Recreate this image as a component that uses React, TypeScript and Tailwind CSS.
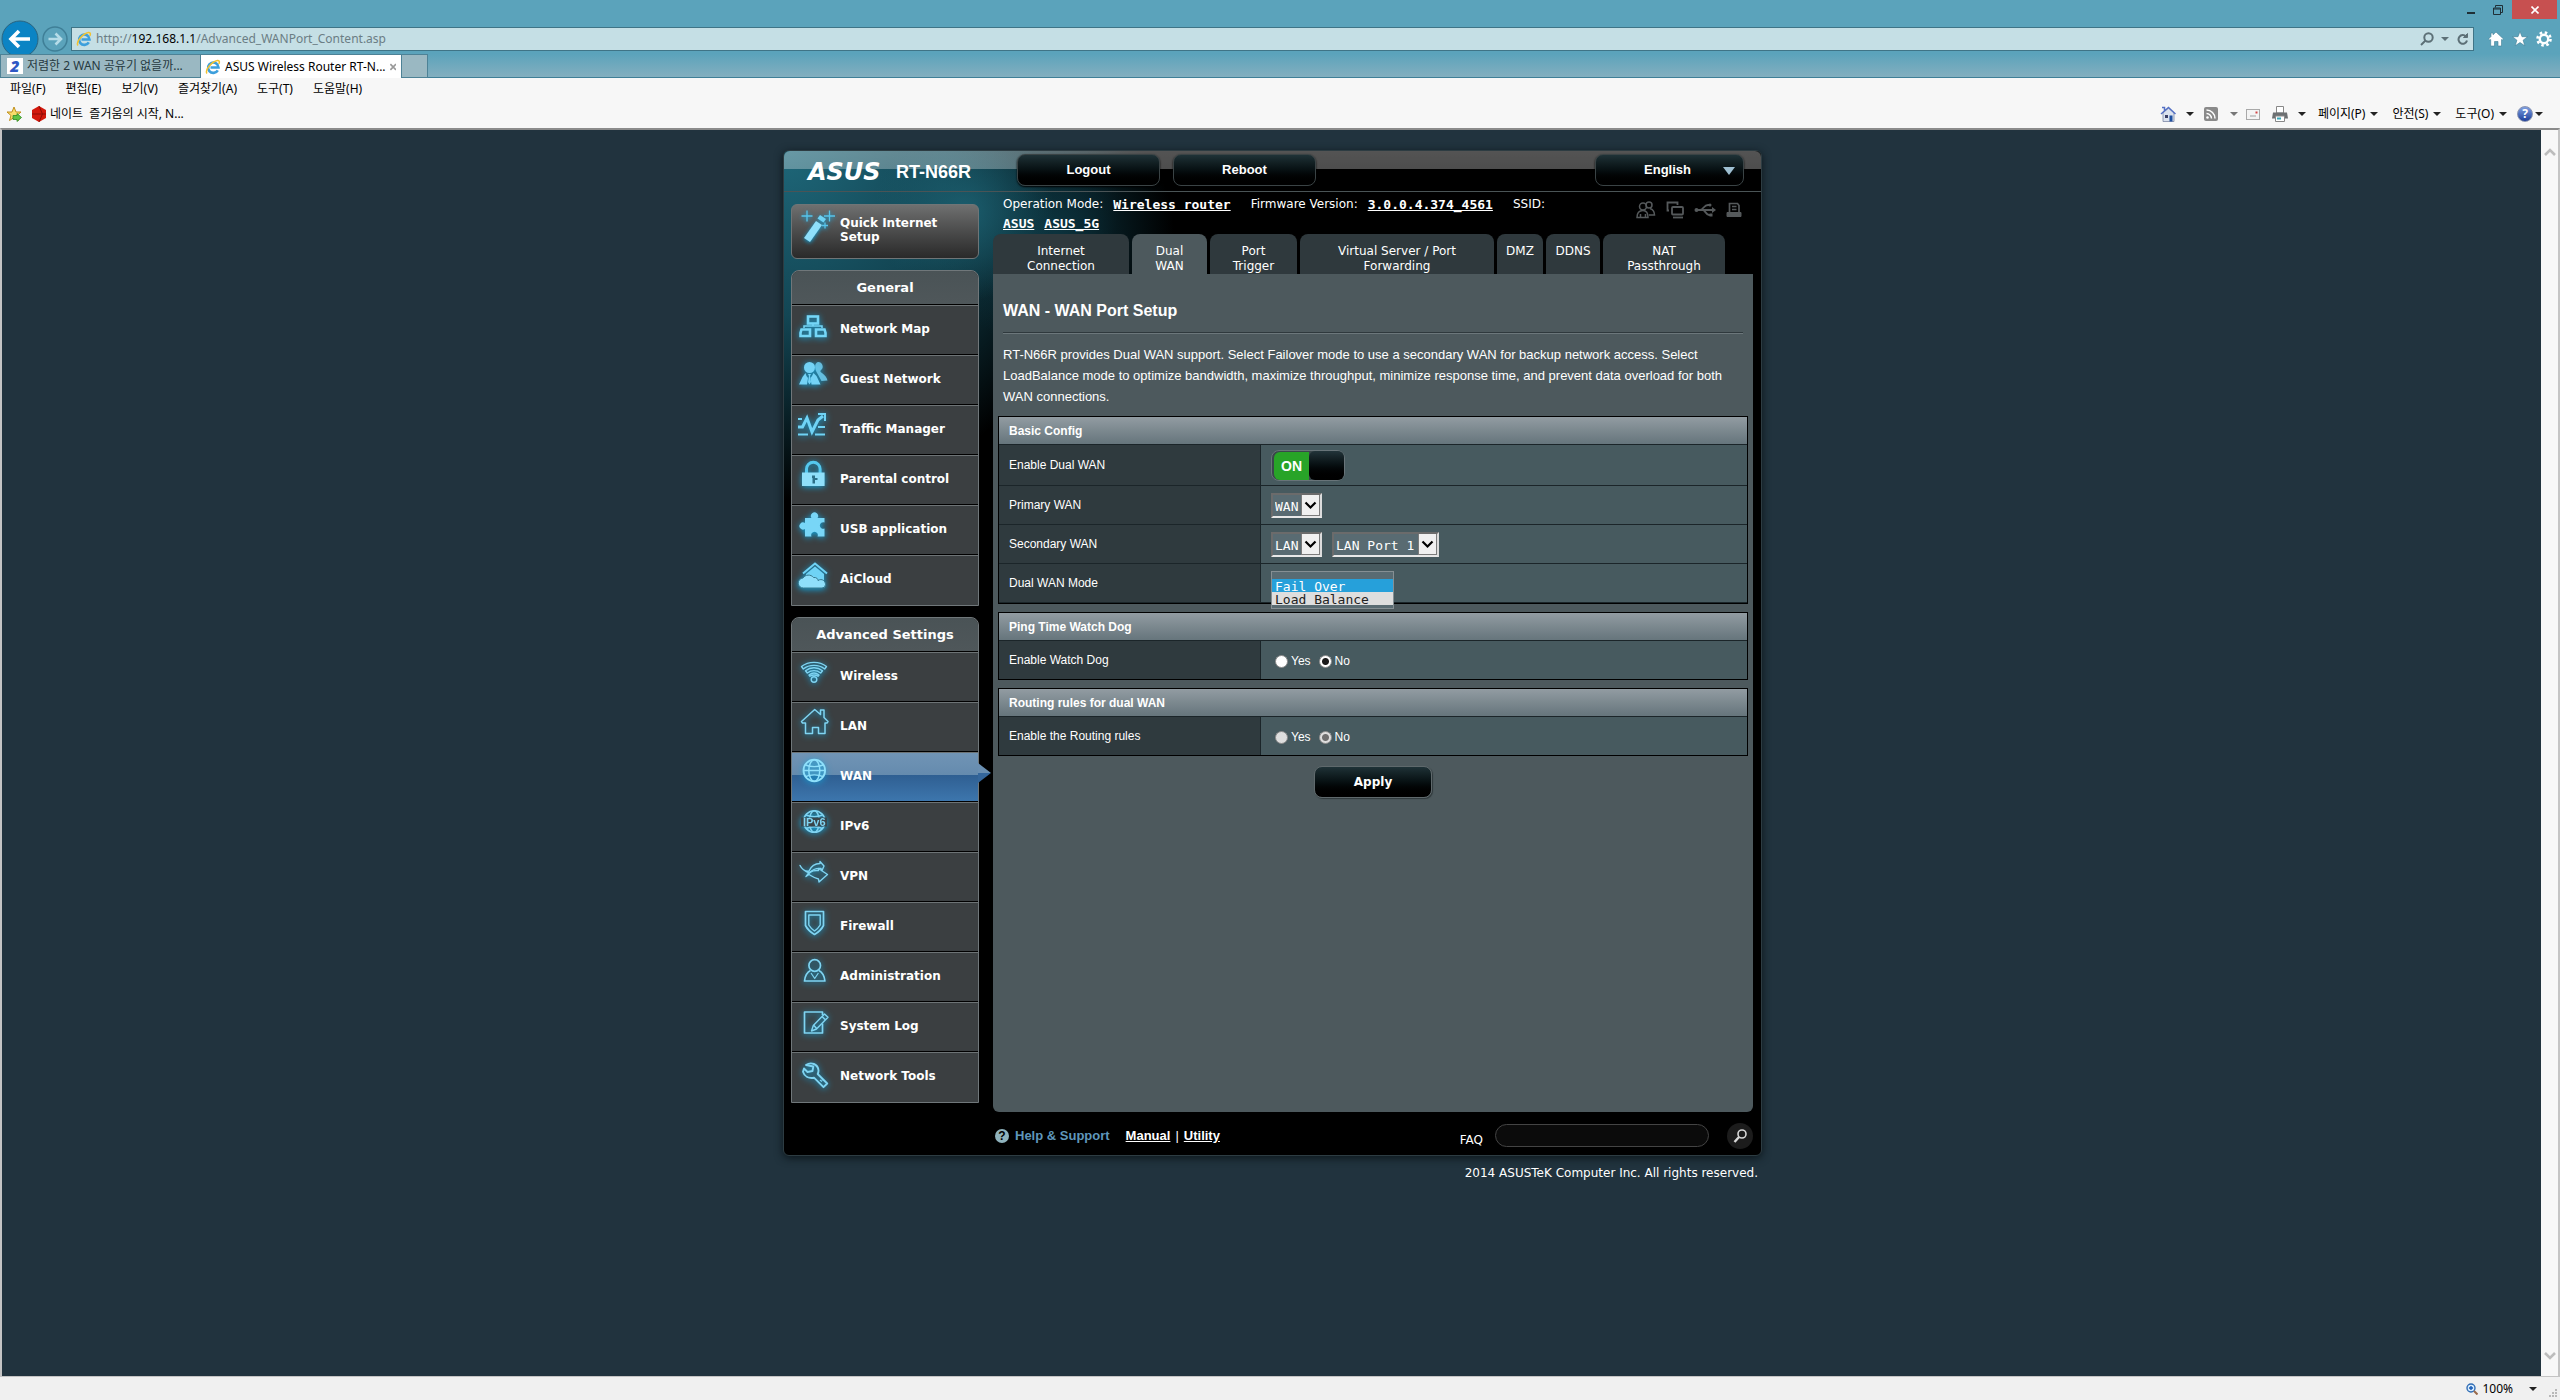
import React from 'react';

interface MenuEntry {
    label: string;
    icon: React.ReactNode;
    active?: boolean;
}

const ICE = '#7fd4f2';

const generalMenu: MenuEntry[] = [
    {
        label: 'Network Map',
        icon: (
            <g fill="none" stroke="#74d6f7" strokeWidth="2.600">
                <rect x="12" y="6.500" width="10" height="7" />
                <path d="M17 13.500v3M8 18v-2h18v2" strokeWidth="1.500" />
                <path d="M5.500 19.500H14v6.500H4.500v-3z" />
                <path d="M20 19.500h8.500l1 3.500v3H20z" />
            </g>
        ),
    },
    {
        label: 'Guest Network',
        icon: (
            <g fill="#74d3f6">
                <path d="M22 2a4.500 4.500 0 0 1 3 8c-1 1-1 2 1 3 3 2 5 5 5.500 7.500l-6 .5-5-9c-2-4-2-9 1.500-10z" opacity=".8" />
                <circle cx="13.500" cy="7.500" r="5.500" />
                <path d="M9.500 13l-3 4-3.500 7.500h8l1-6.500-1.500-2zM17.500 13l3 3 4 8.500h-9l-1-6.500 1.500-2z" />
                <path d="M12 14h3l-1 2 1 6-1.500 2.500L12 22l1-6z" />
            </g>
        ),
    },
    {
        label: 'Traffic Manager',
        icon: (
            <g fill="none" stroke="#6fd3f5">
                <path d="M2 17h4.500L11 8l5 14L22 10l5-4" strokeWidth="3" />
                <path d="M22 4h7v7" strokeWidth="2" />
                <path d="M2 9h4M2 24.500h10M19 24.500h10M22 17h7" strokeWidth="2" />
            </g>
        ),
    },
    {
        label: 'Parental control',
        icon: (
            <g>
                <path d="M10.500 13V9a6.800 6.800 0 0 1 13.600 0v4" fill="none" stroke="#55c8ee" strokeWidth="3" />
                <path d="M6 12.500h22.600v13.500H6z" fill="#8fdffa" />
                <path d="M16 15.500h3v2.500h2.500v2H19v3.500h-2.500V18H16z" fill="#2b6f88" />
            </g>
        ),
    },
    {
        label: 'USB application',
        icon: (
            <path
                d="M9 8h6.500a3.600 3.600 0 1 1 6 0h7v4.500a3.300 3.300 0 1 0 0 6v8h-7a3.300 3.300 0 1 0-6 0H9V19a3.600 3.600 0 1 1 0-6z"
                fill="#78d6f7"
            />
        ),
    },
    {
        label: 'AiCloud',
        icon: (
            <g>
                <path d="M7 13.500L19 3.500l12 10" fill="none" stroke="#6fd3f5" strokeWidth="2" />
                <path d="M10 14l9-7.500 9 7.500v6H10z" fill="#6fd3f5" />
                <path
                    d="M7.500 28a5 5 0 0 1-.5-10c2-3.500 8-4 10.500-.5 3-.5 4.500 1.500 4.500 3 4-2.500 7.500.5 7.500 4a3.500 3.500 0 0 1-3.500 3.500z"
                    fill="#8fdffa"
                    stroke="#35788e"
                    strokeWidth="1"
                />
            </g>
        ),
    },
];

const advancedMenu: MenuEntry[] = [
    {
        label: 'Wireless',
        icon: (
            <g fill="none" stroke={ICE} strokeWidth="1.4" strokeLinejoin="round">
                <path d="M5.500 9.500c7-5.500 18-5.500 25 0l-1.800 2.500c-6-4.800-15.400-4.800-21.400 0z" />
                <path d="M9.500 13.800c5-4 12-4 17 0l-1.800 2.200c-4-3-9.400-3-13.400 0z" />
                <path d="M13 18c3-2.300 7-2.300 10 0l-1 1.200c-2.500-1.500-5.500-1.500-8 0z" />
                <circle cx="18" cy="22.500" r="2.800" />
            </g>
        ),
    },
    {
        label: 'LAN',
        icon: (
            <path
                d="M5.500 14.500L18.700 2.500l5.800 5V3h3.500v7.500l4 4-1 1.500h-2v10.500h-6.500v-6h-6v6H9.500V16h-3z"
                fill="none"
                stroke={ICE}
                strokeWidth="1.500"
                strokeLinejoin="round"
            />
        ),
    },
    {
        label: 'WAN',
        active: true,
        icon: (
            <g fill="none" stroke="#8fe0fb" strokeWidth="1.500">
                <circle cx="18.300" cy="13.500" r="10.800" strokeWidth="1.800" />
                <ellipse cx="18.300" cy="13.500" rx="5.500" ry="10.800" />
                <path d="M9.500 8c5 2 12.500 2 17.500 0M7.500 13.500h21.600M9.500 19.500c5-2 12.500-2 17.500 0" />
            </g>
        ),
    },
    {
        label: 'IPv6',
        icon: (
            <g fill="none" stroke={ICE} strokeWidth="1.500">
                <circle cx="18.300" cy="14.500" r="10.800" />
                <ellipse cx="18.300" cy="14.500" rx="5" ry="10.800" />
                <path d="M10 8c5 2 11.500 2 16.500 0M10 21.500c5-2 11.500-2 16.500 0" />
                <path d="M5 10.500h26v9H5z" fill="#3a454a" stroke="none" />
                <text x="18.300" y="19" textAnchor="middle" fontSize="11" fontWeight="bold" fontFamily="Liberation Sans" fill={ICE} stroke="none">IPv6</text>
            </g>
        ),
    },
    {
        label: 'VPN',
        icon: (
            <g fill="none" stroke={ICE} strokeWidth="1.400" strokeLinejoin="round">
                <path d="M4 8.500c3 5 6 6 9 5.500 2-4.500 6-7.500 11-7.500v-2l4 4.500-2 4.500-1-2c-5-.5-8.500 1-11.500 4.500-3-1-7-2.500-9.500-7.500z" />
                <path d="M10 19.500c2-4 6-6.500 12.500-6v-2l9 6-8.500 7.500-.5-3c-4-.8-7-3-9.500-4.500z" />
            </g>
        ),
    },
    {
        label: 'Firewall',
        icon: (
            <g fill="none" stroke={ICE} strokeWidth="1.700" strokeLinejoin="round">
                <path d="M9.500 4.500h18v14c-1.500 3-5.500 7-9 9-3.500-2-7.500-6-9-9z" />
                <path d="M12.800 8h11.400v10c-1.500 2.500-3.500 4.500-5.700 6-2.200-1.500-4.200-3.500-5.700-6z" strokeWidth="1.400" />
            </g>
        ),
    },
    {
        label: 'Administration',
        icon: (
            <g fill="none" stroke={ICE} strokeWidth="1.700" strokeLinejoin="round">
                <circle cx="18.700" cy="8.500" r="5.800" />
                <path d="M14.500 13.500c-4 2-5.500 6-6 10.500h20.400c-.5-4.500-2-8.500-6-10.500" />
                <path d="M15 16l3.700 5.500 3.700-5.500" strokeWidth="1.200" />
            </g>
        ),
    },
    {
        label: 'System Log',
        icon: (
            <g fill="none" stroke={ICE} strokeWidth="1.700" strokeLinejoin="round">
                <path d="M26.500 16.500V26H8.500V5h18v3" />
                <path d="M15.500 24l1.800-5.500L28.500 7l3.500 3.300L20.500 22zM26 9.500l3.300 3.300M18 18.500l2.500 3" strokeWidth="1.400" />
            </g>
        ),
    },
    {
        label: 'Network Tools',
        icon: (
            <g fill="none" stroke={ICE} strokeWidth="1.900" strokeLinejoin="round">
                <path d="M10 8c5-3.500 12-1 12.500 5.500 0 1.500-.3 2.500-.8 3.500l9.500 9.500-3.700 3.700-9.500-9.500c-5 1-9.500-1-11-6l1-3.200 3.500 3.500 5-1 .8-4.500z" />
                <path d="M24 23l2 1.500M26 21.500l1.500 2" strokeWidth="1.300" />
            </g>
        ),
    },
];

const tabs = [
    { label: 'Internet\nConnection', width: 'w-[136px]' },
    { label: 'Dual\nWAN', width: 'w-[75px]', active: true },
    { label: 'Port\nTrigger', width: 'w-[87px]' },
    { label: 'Virtual Server / Port\nForwarding', width: 'w-[194px]' },
    { label: 'DMZ', width: 'w-[46px]' },
    { label: 'DDNS', width: 'w-[54px]' },
    { label: 'NAT\nPassthrough', width: 'w-[122px]' },
];

const Caret = ({ dim = false }: { dim?: boolean }) => (
    <svg viewBox="0 0 8 4" className={`w-2 h-1 shrink-0 ${dim ? 'fill-[#777777]' : 'fill-[#222222]'}`}>
        <path d="M0 0h8L4 4z" />
    </svg>
);

const IeLogo = () => (
    <svg viewBox="0 0 16 16" className="w-4 h-4 shrink-0" fill="none">
        <path d="M12.800 11.300A5.200 5.200 0 1 1 13.500 8.500H5.500" stroke="#3d9fdc" strokeWidth="2.600" />
        <path d="M2 14.500C-.5 11 7 2.500 12.500 1.500c2.500-.3 2 2 1.300 3.500" stroke="#f2c230" strokeWidth="1.500" />
    </svg>
);

const BrowserChrome = () => (
    <header className="text-xs text-black">
        <div className="bg-[#5ba3bb]">
            <div className="flex justify-end items-start h-[27px] pr-[3px]">
                <button aria-label="Minimize" className="w-[26px] h-[19px] flex items-center justify-center">
                    <svg viewBox="0 0 10 10" className="w-[10px] h-[10px]"><path d="M1 7h8v2H1z" fill="#1f2f36" /></svg>
                </button>
                <button aria-label="Restore" className="w-7 h-[19px] flex items-center justify-center">
                    <svg viewBox="0 0 10 10" className="w-[10px] h-[10px]" fill="none" stroke="#1f2f36">
                        <path d="M.5 3h7v6.500h-7zM.5 4h7M2.500 2.500V.5h7v7H8" />
                    </svg>
                </button>
                <button aria-label="Close" className="w-[45px] h-[19px] bg-[#c75050] flex items-center justify-center">
                    <svg viewBox="0 0 8 8" className="w-2 h-2" stroke="#ffffff" strokeWidth="1.600"><path d="M.5.5l7 7M7.500.5l-7 7" /></svg>
                </button>
            </div>
            <div className="flex items-center h-6 mb-[3px] pl-px">
                <button aria-label="Back" className="-my-2 shrink-0">
                    <svg viewBox="0 0 38 38" className="w-[38px] h-[38px]">
                        <circle cx="19" cy="19" r="18" fill="#0b84c4" stroke="#2b6580" />
                        <path d="M29 19H11M18 11l-8 8 8 8" fill="none" stroke="#ffffff" strokeWidth="3.600" />
                    </svg>
                </button>
                <button aria-label="Forward" className="ml-[3px] -my-1 shrink-0">
                    <svg viewBox="0 0 26 26" className="w-[26px] h-[26px]" fill="none">
                        <circle cx="13" cy="13" r="12" stroke="#3f7f97" strokeWidth="1.500" />
                        <path d="M6.500 13h12M13.500 7.500l5.500 5.500-5.500 5.500" stroke="#b5dce8" strokeWidth="2.600" />
                    </svg>
                </button>
                <div className="ml-[3px] flex-1 h-6 flex items-center bg-[#c5dfe5] border border-[#3f7486] px-1 font-['Noto_Sans',sans-serif]">
                    <IeLogo />
                    <span className="ml-1 flex-1 text-[#6b7d84]">http://<span className="text-black">192.168.1.1</span>/Advanced_WANPort_Content.asp</span>
                    <button aria-label="Search" className="mr-[7px]">
                        <svg viewBox="0 0 14 14" className="w-[14px] h-[14px]" fill="none" stroke="#5d7077" strokeWidth="2">
                            <circle cx="8.500" cy="5.500" r="4.200" /><path d="M5.500 8.500L1 13" />
                        </svg>
                    </button>
                    <svg viewBox="0 0 8 4" className="w-2 h-1 mr-2"><path d="M0 0h8L4 4z" fill="#5d7077" /></svg>
                    <button aria-label="Refresh">
                        <svg viewBox="0 0 12 12" className="w-3 h-3" fill="none" stroke="#5d7077" strokeWidth="2">
                            <path d="M10 7.500A4.300 4.300 0 1 1 9 3.500" /><path d="M6.500 4.500h4V.500z" fill="#5d7077" strokeWidth="1" />
                        </svg>
                    </button>
                </div>
                <div className="flex items-center gap-2 pl-[14px] pr-2">
                    <button aria-label="Home">
                        <svg viewBox="0 0 16 16" className="w-4 h-4"><path d="M8 1l7.500 7-1.300 1L13.500 8.500V15H10v-4.500H6.500V15H2.700V8.500L1.800 9 .5 8 3 5.500V2h2v1.800z" fill="#ffffff" stroke="#3f7f97" strokeWidth=".6" /></svg>
                    </button>
                    <button aria-label="Favorites">
                        <svg viewBox="0 0 16 16" className="w-4 h-4"><path d="M8 .5l2 5.200h5.600l-4.500 3.500 1.700 5.600L8 11.500l-4.800 3.300 1.700-5.600L.4 5.700H6z" fill="#ffffff" stroke="#3f7f97" strokeWidth=".6" /></svg>
                    </button>
                    <button aria-label="Tools">
                        <svg viewBox="0 0 16 16" className="w-4 h-4" fill="none" stroke="#ffffff">
                            <circle cx="8" cy="8" r="4.200" strokeWidth="2.400" />
                            <circle cx="8" cy="8" r="6.500" strokeWidth="2.600" strokeDasharray="2.500 2.600" />
                        </svg>
                    </button>
                </div>
            </div>
            <div className="relative flex h-6 border-b border-[#3f7f97] bg-linear-to-b from-[#5ba3bb] to-[#83afbf] font-['Noto_Sans','Noto_Sans_CJK_KR',sans-serif]">
                <button className="w-[201px] h-6 flex items-center gap-1 px-[6px] bg-[#9ab8c2] border border-[#4d8296] text-[#26393f] whitespace-nowrap overflow-hidden">
                    <span className="w-4 h-4 shrink-0 bg-white text-[#2f57c4] font-black italic text-base leading-4 text-center">2</span>
                    저렴한 2 WAN 공유기 없을까...
                </button>
                <button className="w-[200px] h-6 flex items-center gap-1 px-1 bg-white border-t border-[#4d8296] whitespace-nowrap overflow-hidden">
                    <IeLogo />
                    <span className="flex-1 text-left">ASUS Wireless Router RT-N...</span>
                    <svg viewBox="0 0 8 8" className="w-2 h-2 mr-px" stroke="#999999" strokeWidth="2"><path d="M.5.5l7 7M7.500.5l-7 7" /></svg>
                </button>
                <button aria-label="New tab" className="w-[27px] h-6 bg-[#9ab8c2] border border-[#4d8296]" />
            </div>
        </div>
        <div className="bg-[#f7f7f7] font-['Noto_Sans','Noto_Sans_CJK_KR',sans-serif]">
            <nav className="flex items-center gap-5 h-[22px] pl-[10px]">
                {['파일(F)', '편집(E)', '보기(V)', '즐겨찾기(A)', '도구(T)', '도움말(H)'].map(item => (
                    <button key={item}>{item}</button>
                ))}
            </nav>
            <div className="flex items-center h-7 pl-[6px] pr-[17px]">
                <svg viewBox="0 0 16 16" className="w-4 h-4">
                    <path d="M8 1l2 5h5l-4 3.500 1.500 5L8 11.500l-4.500 3 1.500-5L1 6h5z" fill="#f8dc6c" stroke="#c08f1c" />
                    <path d="M7 9.500h4V7.500l4.500 4-4.500 4v-2H7z" fill="#5fc446" stroke="#2d8a22" strokeWidth=".8" />
                </svg>
                <svg viewBox="0 0 14 16" className="w-[14px] h-4 ml-[10px]"><path d="M7 0l7 4v8l-7 4-7-4V4z" fill="#d3180c" /><path d="M7 0l3.500 8L7 16M0 8h14" stroke="#8d0d06" fill="none" /></svg>
                <a href="#nate" className="ml-1 flex-1">네이트&nbsp; 즐거움의 시작, N...</a>
                <button aria-label="Home page" className="flex items-center gap-[10px]">
                    <svg viewBox="0 0 16 16" className="w-4 h-4">
                        <path d="M3 7v8.500h11V7L8.500 2z" fill="#dbe2ee" stroke="#7c88a4" strokeWidth=".8" />
                        <path d="M1 8L8.500 1.500 15.500 8M2 1.500h2.500V5" fill="none" stroke="#5470c4" strokeWidth="1.500" />
                        <path d="M9.500 9.500h3v6h-3z" fill="#1d4fa0" /><path d="M5 9h3v3H5z" fill="#3a3f66" />
                    </svg>
                    <Caret />
                </button>
                <button aria-label="Feeds" className="flex items-center gap-3 ml-[10px]">
                    <svg viewBox="0 0 14 14" className="w-[14px] h-[14px]">
                        <rect width="14" height="14" rx="2" fill="#8a8a8a" />
                        <circle cx="3.500" cy="10.500" r="1.300" fill="#ffffff" />
                        <path d="M2.500 6.500a5 5 0 0 1 5 5M2.500 3a8.500 8.500 0 0 1 8.500 8.500" fill="none" stroke="#ffffff" strokeWidth="1.500" />
                    </svg>
                    <Caret dim />
                </button>
                <svg viewBox="0 0 14 11" className="w-[14px] h-[11px] ml-2"><rect x=".5" y=".5" width="13" height="10" fill="#f4f4f4" stroke="#a9a9a9" /><path d="M9.500 2.500h2v2h-2z" fill="#d24545" /><path d="M4 7h6" stroke="#a0a0a0" /></svg>
                <button aria-label="Print" className="flex items-center gap-[10px] ml-3">
                    <svg viewBox="0 0 16 16" className="w-4 h-4">
                        <path d="M4.500.5h7V7h-7z" fill="#ffffff" stroke="#888888" />
                        <path d="M1 6.500h14l1 6H0z" fill="#6d7072" /><path d="M3.500 10h9v5.500h-9z" fill="#ffffff" stroke="#888888" /><path d="M5 11.500h4v2H5z" fill="#3aa6b8" />
                    </svg>
                    <Caret />
                </button>
                <button className="flex items-center gap-[5px] ml-3">페이지(P)<Caret /></button>
                <button className="flex items-center gap-[5px] ml-[14px]">안전(S)<Caret /></button>
                <button className="flex items-center gap-[5px] ml-[14px]">도구(O)<Caret /></button>
                <button aria-label="Help" className="flex items-center gap-[2px] ml-[10px]">
                    <span className="w-4 h-4 rounded-full bg-linear-to-b from-[#7f9fe0] to-[#1f3f9c] border border-[#8a94b0] text-white font-bold leading-[14px] text-center">?</span>
                    <Caret />
                </button>
            </div>
        </div>
    </header>
);

const SideMenu = ({ title, items }: { title: string; items: MenuEntry[] }) => (
    <nav className="border border-[#70777a] rounded-t-lg bg-[#3b3f41]">
        <h2 className="h-[34px] pt-px flex items-center justify-center rounded-t-lg border-b border-black bg-linear-to-b from-[#4a5356] to-[#4f575a] text-[13px] font-bold">{title}</h2>
        {items.map((item, index) => (
            <a
                key={item.label}
                href={`#${item.label}`}
                className={`relative flex items-start h-[50px] pl-1 border-t border-[#6d7375] ${
                    index < items.length - 1 ? 'border-b border-b-black' : ''
                } ${item.active ? 'bg-[linear-gradient(#7094b5_0%,#658bae_45%,#2f5f92_46%,#3d76ad_100%)]' : ''}`}
            >
                <svg viewBox="0 0 34 32" className="w-[34px] h-8 mt-1 shrink-0 overflow-visible drop-shadow-[0_1px_3px_#12a5dc]">
                    {item.icon}
                </svg>
                <span className="ml-[10px] leading-[46px] whitespace-nowrap">{item.label}</span>
                {item.active && (
                    <svg viewBox="0 0 13 20" className="absolute left-full top-[10px] w-[13px] h-5">
                        <path d="M0 0l13 10H0z" fill="#6a8fb2" />
                        <path d="M0 20l13-10H0z" fill="#34669b" />
                    </svg>
                )}
            </a>
        ))}
    </nav>
);

const BevelSelect = ({ id, label, options, width }: { id: string; label: string; options: string[]; width: string }) => (
    <span className={`relative inline-flex h-[25px] ${width}`}>
        <select
            id={id}
            aria-label={label}
            className="appearance-none w-full h-full pl-[2px] pt-[2px] bg-[#596b72] border-2 border-t-[#6b6b6b] border-l-[#6b6b6b] border-r-[#dcdcdc] border-b-[#e8e8e8] font-['DejaVu_Sans_Mono',monospace] text-[13px] leading-none text-white"
        >
            {options.map(o => <option key={o}>{o}</option>)}
        </select>
        <svg viewBox="0 0 19 21" className="absolute right-[2px] top-[2px] w-[19px] h-[21px] pointer-events-none">
            <path d="M0 0h19v21H0z" fill="#7b7b7b" />
            <path d="M1 0h17v20H1z" fill="#f0f0f0" />
            <path d="M4.500 7.500l5 5 5-5" fill="none" stroke="#000000" strokeWidth="2.200" />
        </svg>
    </span>
);

const ConfigTable = ({ title, children }: { title: string; children: React.ReactNode }) => (
    <table className="w-full border border-black border-separate border-spacing-0 text-xs text-white bg-[#475a5f]">
        <thead>
            <tr>
                <th colSpan={2} className="h-7 p-0 pl-[10px] text-left border-b border-[#1b2529] bg-linear-to-b from-[#929ca2] to-[#66757c]">{title}</th>
            </tr>
        </thead>
        <tbody>{children}</tbody>
    </table>
);

const Row = ({ label, children, tall = false, last = false }: { label: string; children: React.ReactNode; tall?: boolean; last?: boolean }) => (
    <tr className={tall ? 'h-[41px]' : last ? 'h-[38px]' : 'h-[39px]'}>
        <th scope="row" className={`w-[262px] p-0 pl-[10px] text-left font-normal bg-[#2f3a3e] border-r border-[#1b2529] ${last ? '' : 'border-b'}`}>{label}</th>
        <td className={`p-0 pl-[10px] align-middle border-[#1b2529] ${last ? '' : 'border-b'}`}>{children}</td>
    </tr>
);

const YesNo = ({ name, disabled = false }: { name: string; disabled?: boolean }) => (
    <div className="flex items-center pl-1 pt-[2px]">
        {['Yes', 'No'].map(option => (
            <label key={option} className="flex items-center mr-2">
                <input
                    type="radio"
                    name={name}
                    disabled={disabled}
                    defaultChecked={option === 'No'}
                    className="appearance-none w-[13px] h-[13px] mr-[3px] rounded-full border border-[#8a8a8a] bg-white disabled:bg-[#dedede] checked:bg-[radial-gradient(circle,#1a1a1a_3px,#ffffff_4px)] disabled:checked:bg-[radial-gradient(circle,#6f6f6f_3px,#dedede_4px)]"
                />
                {option}
            </label>
        ))}
    </div>
);

const TopButton = ({ children, className = '' }: { children: React.ReactNode; className?: string }) => (
    <button
        className={`relative h-8 rounded-lg border border-[#3a4345] bg-linear-to-b from-[#1f3237] via-[#071012] to-black font-['Liberation_Sans',sans-serif] text-[13px] font-bold shadow-[0_1px_2px_#000000] ${className}`}
    >
        {children}
    </button>
);

const StatusIcons = () => (
    <div className="flex items-center gap-[10px] h-9 pr-[11px]">
        <svg viewBox="0 0 20 18" className="w-5 h-[18px]" fill="none" stroke="#55595b" strokeWidth="1.500">
            <circle cx="7" cy="5.500" r="3.500" /><circle cx="13" cy="4" r="3" />
            <path d="M1 16.500c0-5 2.500-7 6-7s5 2 5 7zM4.500 16v-3M9.500 16v-3M14 7.500c3 1 4.500 3 4.500 6.500H13" />
        </svg>
        <svg viewBox="0 0 18 18" className="w-[18px] h-[18px]" fill="none" stroke="#55595b" strokeWidth="1.800">
            <path d="M3 9.500H1.500V1.500h10V4" /><rect x="6" y="6" width="11" height="7.500" rx="1" /><path d="M7 16.500h10" />
        </svg>
        <svg viewBox="0 0 22 18" className="w-[22px] h-[18px]" fill="none" stroke="#55595b" strokeWidth="1.800">
            <path d="M1 9h19M6 9c3 0 4-5 8-5h2M9 9c2 0 3 5 6 5h2" /><path d="M18 6l4 3-4 3z" fill="#55595b" stroke="none" />
            <circle cx="2.500" cy="9" r="2" fill="#55595b" stroke="none" /><circle cx="16" cy="4" r="1.500" fill="#55595b" stroke="none" /><path d="M15.500 12.500h3v3h-3z" fill="#55595b" stroke="none" />
        </svg>
        <svg viewBox="0 0 16 18" className="w-4 h-[18px]" fill="none" stroke="#55595b" strokeWidth="1.700">
            <path d="M3.500 11.500V2.500h8l1.500 2v7M6 5.500h4.500M6 8.500h4.500" /><path d="M1 11.500h14v4H1z" fill="#55595b" strokeWidth="1" />
        </svg>
    </div>
);

const monoLink = "font-['DejaVu_Sans_Mono',monospace] text-[13px] font-bold underline";

const RouterPanel = () => (
    <div className="w-full max-w-[979px] mx-auto">
        <div className="rounded-md border border-[#2d3c42] bg-black shadow-[0_2px_8px_#0c161b] bg-[radial-gradient(circle_at_180px_60px,#1b5d6d_0,transparent_90px),radial-gradient(circle_at_270px_80px,#0c333e_0,transparent_120px),radial-gradient(ellipse_at_0_0,#1e6779_0,#134654_160px,transparent_340px)] bg-no-repeat">
            <div className="flex items-start h-[41px] pt-[3px] pr-[17px] border-b border-[#4a5456] rounded-t-md bg-[linear-gradient(rgba(255,255,255,0.33),rgba(255,255,255,0.30))] bg-[length:100%_18px] bg-no-repeat">
                <span className="ml-6 mt-[6px] w-20 font-['DejaVu_Sans',sans-serif] text-2xl leading-6 font-bold italic">ASUS</span>
                <span className="ml-2 mt-[6px] w-[121px] font-['Liberation_Sans',sans-serif] text-lg leading-6 font-bold">RT-N66R</span>
                <TopButton className="w-[143px]">Logout</TopButton>
                <TopButton className="ml-[13px] w-[143px]">Reboot</TopButton>
                <TopButton className="ml-auto w-[149px]">
                    <span className="-ml-1">English</span>
                    <svg viewBox="0 0 12 8" className="absolute right-2 top-3 w-3 h-2"><path d="M0 0h12L6 8z" fill="#9fc0d2" /></svg>
                </TopButton>
            </div>
            <div className="flex pl-[7px] pr-2 items-start">
                <aside className="w-[188px] shrink-0 flex flex-col gap-[11px] pt-3 text-xs font-bold">
                    <button className="flex items-start h-[55px] rounded-md border border-[#6f7577] bg-linear-to-b from-[#6f7070] to-[#2a2a2a] text-left leading-[14px]">
                        <svg viewBox="0 0 38 40" className="w-[38px] h-10 ml-2 mt-[2px] shrink-0 overflow-visible drop-shadow-[0_1px_2px_#12a5dc]">
                            <path d="M4 31l12-17 6 4-12 17z" fill="#8fdffa" /><path d="M17.500 11.500l2.500-3.500 6 4-2.500 3.500z" fill="#6fd3f5" />
                            <path d="M7 3.500v11M1.500 9h11M29.500 3.500v11M24 9h11M25 15.500v6M22 18.500h6" stroke="#58c4ea" strokeWidth="1.300" />
                        </svg>
                        <span className="ml-[2px] mt-[11px]">Quick Internet<br />Setup</span>
                    </button>
                    <SideMenu title="General" items={generalMenu} />
                    <SideMenu title="Advanced Settings" items={advancedMenu} />
                </aside>
                <main className="flex-1 min-w-0 ml-[14px]">
                    <div className="flex justify-between h-[42px] text-xs">
                        <div className="pl-[10px] pt-[3px] leading-[19px]">
                            <div className="flex gap-5">
                                <span className="flex gap-[10px]">Operation Mode: <a href="#mode" className={monoLink}>Wireless router</a></span>
                                <span className="flex gap-[10px]">Firmware Version: <a href="#firmware" className={monoLink}>3.0.0.4.374_4561</a></span>
                                <span>SSID:</span>
                            </div>
                            <div className="flex gap-[10px]">
                                <a href="#ssid" className={monoLink}>ASUS</a>
                                <a href="#ssid5g" className={monoLink}>ASUS_5G</a>
                            </div>
                        </div>
                        <StatusIcons />
                    </div>
                    <div className="flex gap-[3px] h-10 text-xs leading-[15px]">
                        {tabs.map(tab => (
                            <a
                                key={tab.label}
                                href={`#${tab.label}`}
                                className={`${tab.width} pt-[10px] text-center whitespace-pre-line rounded-t-lg ${tab.active ? 'bg-[#4d595d]' : 'bg-[#2f393d]'}`}
                            >
                                {tab.label}
                            </a>
                        ))}
                    </div>
                    <section className="min-h-[838px] rounded-b-md bg-[#4d595d] px-[5px] font-['Liberation_Sans',sans-serif]">
                        <h1 className="mx-[5px] h-[59px] pt-[25px] border-b border-[#2f393d] shadow-[0_1px_0_#6c777b] text-base font-bold">WAN - WAN Port Setup</h1>
                        <p className="mx-[5px] pt-[11px] pb-[9px] text-[13px] leading-[21px]">
                            RT-N66R provides Dual WAN support. Select Failover mode to use a secondary WAN for backup network access. Select LoadBalance mode to optimize bandwidth, maximize throughput, minimize response time, and prevent data overload for both WAN connections.
                        </p>
                        <div className="flex flex-col gap-2">
                            <ConfigTable title="Basic Config">
                                <Row label="Enable Dual WAN" tall>
                                    <button role="switch" aria-checked="true" aria-label="Enable Dual WAN" className="flex w-[74px] h-[31px] pl-[2px] rounded-lg border border-[#687479] bg-[#3a474b] align-middle">
                                        <span className="w-[35px] h-7 mt-px rounded-l-md bg-[#28a428] text-sm leading-7 font-bold text-center">ON</span>
                                        <span className="w-[35px] h-[29px] rounded-md bg-linear-to-b from-[#22343a] to-black" />
                                    </button>
                                </Row>
                                <Row label="Primary WAN">
                                    <div className="flex"><BevelSelect id="primary" label="Primary WAN" options={['WAN', 'USB']} width="w-[51px]" /></div>
                                </Row>
                                <Row label="Secondary WAN">
                                    <div className="flex gap-[10px]">
                                        <BevelSelect id="secondary" label="Secondary WAN" options={['LAN', 'USB']} width="w-[51px]" />
                                        <BevelSelect id="lanport" label="LAN port" options={['LAN Port 1', 'LAN Port 2']} width="w-[107px]" />
                                    </div>
                                </Row>
                                <Row label="Dual WAN Mode">
                                    <div className="relative h-6">
                                        <select
                                            size={2}
                                            aria-label="Dual WAN Mode"
                                            defaultValue="Fail Over"
                                            className="absolute left-0 top-0 z-10 w-[123px] h-[38px] p-0 pt-[7px] overflow-hidden bg-[#596b72] border border-[#858f93] rounded-none font-['DejaVu_Sans_Mono',monospace] text-[13px] leading-[13px]"
                                        >
                                            <option className="h-[13px] min-h-0 p-0 pl-[3px] text-white bg-[#26a0da] checked:bg-[linear-gradient(#26a0da,#26a0da)] checked:text-white">Fail Over</option>
                                            <option className="h-[13px] min-h-0 p-0 pl-[3px] text-[#222222] bg-[#dedede]">Load Balance</option>
                                        </select>
                                    </div>
                                </Row>
                            </ConfigTable>
                            <ConfigTable title="Ping Time Watch Dog">
                                <Row label="Enable Watch Dog" last><YesNo name="watchdog" /></Row>
                            </ConfigTable>
                            <ConfigTable title="Routing rules for dual WAN">
                                <Row label="Enable the Routing rules" last><YesNo name="routing" disabled /></Row>
                            </ConfigTable>
                        </div>
                        <div className="flex justify-center pt-[10px]">
                            <button className="w-[118px] h-8 rounded-lg border border-[#5f696c] bg-linear-to-b from-[#1f3237] via-[#071012] to-black font-['DejaVu_Sans',sans-serif] text-xs font-bold shadow-[1px_1px_1px_#30393c]">Apply</button>
                        </div>
                    </section>
                </main>
            </div>
            <footer className="flex items-center h-[43px] pl-[211px] pr-2 pt-1 font-['Liberation_Sans',sans-serif] text-[13px] font-bold">
                <span className="w-[14px] h-[14px] rounded-full bg-[#8fb3bd] text-black text-xs leading-[14px] text-center">?</span>
                <a href="#help" className="ml-[6px] text-[#5f97bb]">Help &amp; Support</a>
                <a href="#manual" className="ml-4 underline">Manual</a>
                <span className="mx-[5px] font-normal">|</span>
                <a href="#utility" className="underline">Utility</a>
                <label htmlFor="faq" className="ml-auto mr-3 pt-2 font-['DejaVu_Sans',sans-serif] text-xs font-normal">FAQ</label>
                <input id="faq" type="text" className="w-[214px] h-[23px] rounded-xl border border-[#444444] bg-[#0b0b0b] px-3" />
                <button aria-label="Search FAQ" className="ml-[18px] w-[26px] h-[26px] rounded-full bg-[#1c1c1c] flex items-center justify-center">
                    <svg viewBox="0 0 14 14" className="w-[14px] h-[14px]" fill="none" stroke="#d8d8d8" strokeWidth="1.600">
                        <circle cx="9" cy="5" r="4" /><path d="M6 8l-4.500 5" strokeWidth="2.400" />
                    </svg>
                </button>
            </footer>
        </div>
        <p className="pt-[9px] pr-1 text-right text-xs leading-4">2014 ASUSTeK Computer Inc. All rights reserved.</p>
    </div>
);

const App: React.FC = () => (
    <div className="min-h-screen flex flex-col bg-[#f0f0f0]">
        <BrowserChrome />
        <div className="flex-1 flex border-t-2 border-[#8b8b8b] border-x-2 border-x-[#c4c4c4] border-b border-b-[#c4c4c4]">
            <div className="flex-1 min-w-0 pt-5 pl-[2px] bg-[#21333e] font-['DejaVu_Sans',sans-serif] text-white">
                <RouterPanel />
            </div>
            <div className="w-[17px] flex flex-col justify-between items-center pt-[18px] pb-4 bg-[#f7f7f7]">
                <svg viewBox="0 0 12 8" className="w-3 h-2" fill="none" stroke="#bcbcbc" strokeWidth="2.600"><path d="M1 7l5-5 5 5" /></svg>
                <svg viewBox="0 0 12 8" className="w-3 h-2" fill="none" stroke="#bcbcbc" strokeWidth="2.600"><path d="M1 1l5 5 5-5" /></svg>
            </div>
        </div>
        <footer className="flex items-center justify-end h-[23px] text-xs text-black font-['Noto_Sans',sans-serif]">
            <svg viewBox="0 0 12 12" className="w-3 h-3">
                <circle cx="5" cy="5" r="4" fill="#d7eafb" stroke="#2f6db5" strokeWidth="1.400" /><path d="M5 3v4M3 5h4" stroke="#1559b5" strokeWidth="1.400" /><path d="M8 8l3.500 3.500" stroke="#9a6a4a" strokeWidth="2" />
            </svg>
            <span className="ml-1 mr-4">100%</span>
            <Caret />
            <svg viewBox="0 0 9 9" className="self-end w-[9px] h-[9px] ml-3 mr-[2px] mb-[2px] fill-[#b8b8b8]">
                <path d="M6 0h2v2H6zM3 3h2v2H3zM6 3h2v2H6zM0 6h2v2H0zM3 6h2v2H3zM6 6h2v2H6z" />
            </svg>
        </footer>
    </div>
);

export default App;
